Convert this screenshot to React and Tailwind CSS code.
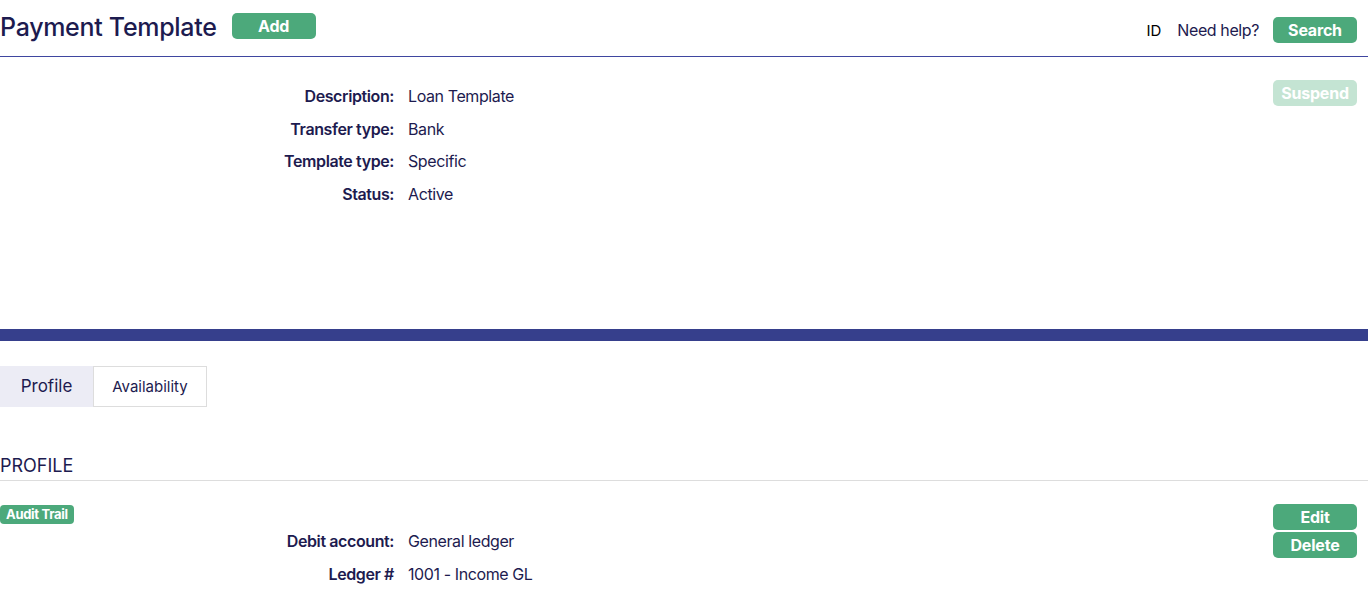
const font = { fontFamily: "Inter, 'Noto Sans', sans-serif" };

function GreenButton({ children, faded }) {
  return (
    <button
      className={`w-[84px] h-[26px] rounded-[5px] text-white font-bold text-[16px] leading-none tracking-[-0.2px] ${
        faded ? "bg-[#c4e4d3]" : "bg-[#4ca97b]"
      }`}
    >
      {children}
    </button>
  );
}

function Field({ label, value }) {
  return (
    <div className="flex items-center h-[32.5px]">
      <div className="w-[394px] text-right font-semibold text-[#1d1b4f]">{label}</div>
      <div className="pl-[14px] text-[#1d1b4f]">{value}</div>
    </div>
  );
}

export default function App() {
  return (
    <div className="bg-white w-[1368px] h-[593px] overflow-hidden text-[15px]" style={font}>
      <div className="flex items-start h-[57px] border-b border-[#3f46a0] pr-[11px]">
        <h1 className="text-[25px] font-medium text-[#1d1b4f] mt-[9px] tracking-[-0.3px]">Payment Template</h1>
        <div className="ml-[15px] mt-[13px]">
          <GreenButton>Add</GreenButton>
        </div>
        <div className="ml-auto mt-[17px] flex items-center">
          <span className="text-[15px] text-black mr-[16px] mt-[2px]">ID</span>
          <span className="text-[16px] text-[#1d1b4f] mr-[14px] tracking-[-0.4px]">Need help?</span>
          <GreenButton>Search</GreenButton>
        </div>
      </div>

      <div className="flex h-[272px] pr-[11px]">
        <div className="flex-1 pt-[23px] text-[16px] tracking-[-0.4px]">
          <Field label="Description:" value="Loan Template" />
          <Field label="Transfer type:" value="Bank" />
          <Field label="Template type:" value="Specific" />
          <Field label="Status:" value="Active" />
        </div>
        <div className="pt-[23px]">
          <GreenButton faded>Suspend</GreenButton>
        </div>
      </div>

      <div className="h-[12px] bg-[#363f8c]" />

      <div className="flex mt-[25px] h-[41px]">
        <div className="w-[93px] bg-[#ececf5] flex items-center justify-center pt-[1px] text-[17px] text-[#1d1b4f]">
          Profile
        </div>
        <div className="w-[114px] border border-[#dddddd] flex items-center justify-center pt-[1px] text-[15px] text-[#1d1b4f]">
          Availability
        </div>
      </div>

      <div className="mt-[46px] pb-[1px] border-b border-[#dddddd] text-[18px] text-[#1d1b4f] leading-[26px]">
        PROFILE
      </div>

      <div className="flex pr-[11px] pt-[24px]">
        <div className="flex-1">
          <span className="block w-fit bg-[#4ca97b] text-white font-bold text-[13px] leading-[19px] px-[6px] rounded-[4px] tracking-[-0.3px]">
            Audit Trail
          </span>
          <div className="mt-[1px] text-[16px] tracking-[-0.4px]">
            <Field label="Debit account:" value="General ledger" />
            <Field label="Ledger #" value="1001 - Income GL" />
          </div>
        </div>
        <div className="flex flex-col gap-[2px] -mt-[1px]">
          <GreenButton>Edit</GreenButton>
          <GreenButton>Delete</GreenButton>
        </div>
      </div>
    </div>
  );
}
